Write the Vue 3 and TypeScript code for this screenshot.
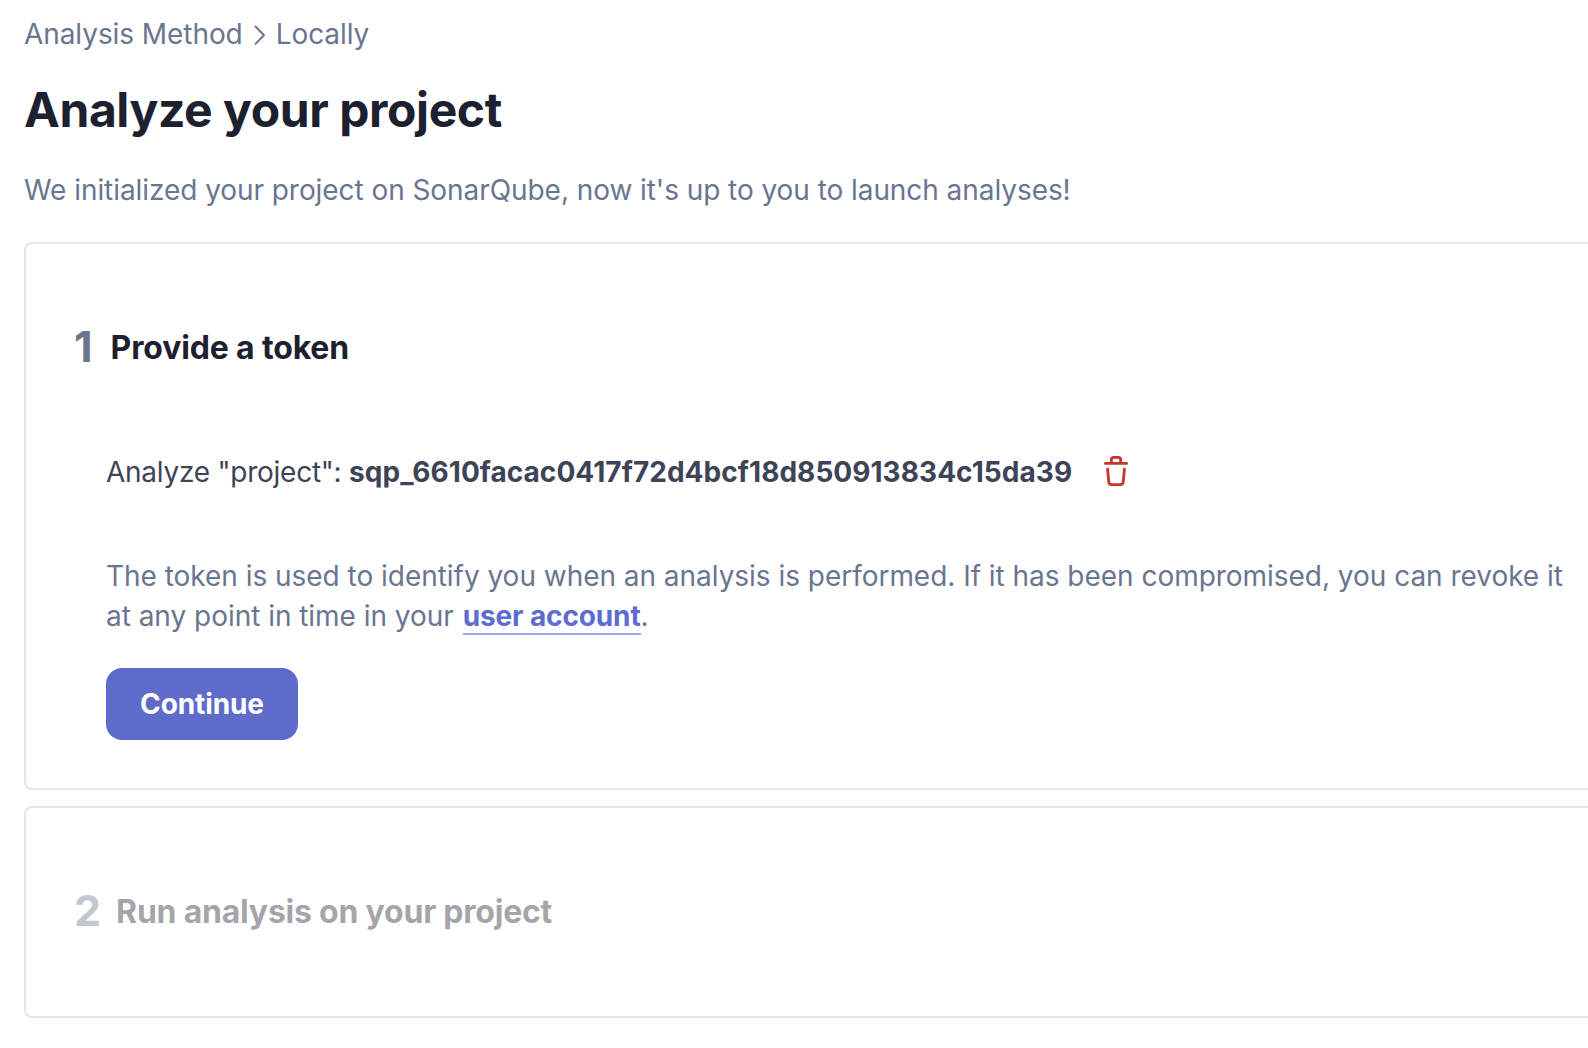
<script setup lang="ts">
const token: string = 'sqp_6610facac0417f72d4bcf18d850913834c15da39'
</script>

<template>
  <main class="page">
    <nav class="crumbs">
      <span>Analysis Method</span>
      <svg width="12" height="22" viewBox="0 0 12 22" fill="none"><path d="M1.5 3.5 L10 12.2 L1.5 20.9" stroke="#6a7590" stroke-width="2" stroke-linecap="round" stroke-linejoin="round" /></svg>
      <span>Locally</span>
    </nav>
    <h1>Analyze your project</h1>
    <p class="intro">We initialized your project on SonarQube, now it's up to you to launch analyses!</p>
    <section class="card first">
      <header><span class="num">1</span><h2>Provide a token</h2></header>
      <div class="body">
        <div class="token">
          <span><span class="label">Analyze "project": </span><strong>{{ token }}</strong></span>
          <svg class="trash" width="24" height="32" viewBox="0 0 24 32" fill="none" stroke="#cb3527" stroke-width="2.8" stroke-linecap="round" stroke-linejoin="round"><path d="M1.4 8.4H22.6M7.4 8V4.5Q7.4 2.4 9.5 2.4H14.5Q16.6 2.4 16.6 4.5V8M3.6 14.2L4.8 27.2Q5 29.6 7.4 29.6H16.6Q19 29.6 19.2 27.2L20.4 14.2" /></svg>
        </div>
        <p class="note">The token is used to identify you when an analysis is performed. If it has been compromised, you can revoke it<br />at any point in time in your <a>user account</a>.</p>
        <button>Continue</button>
      </div>
    </section>
    <section class="card second">
      <header><span class="num">2</span><h2>Run analysis on your project</h2></header>
    </section>
  </main>
</template>

<style>
body { background: #fff; overflow: hidden; }
</style>
<style scoped>
.page { box-sizing: border-box; width: 1640px; height: 1048px; padding: 14px 0 0 24px; font: 400 28px/40px Inter, sans-serif; color: #6a7590; }
.crumbs { display: flex; align-items: center; gap: 10px; height: 40px; letter-spacing: -.07px; }
.crumbs svg { margin-left: 1px; }
h1 { margin: 24px 0 0; font-size: 48px; line-height: 64px; font-weight: 650; letter-spacing: -.42px; color: #1d212f; }
.intro { margin: 28px 0 32px; letter-spacing: -.063px; }
.card { box-sizing: border-box; border: 2px solid #e1e4f3; border-radius: 8px; padding: 80px 48px 0; }
.first { height: 548px; margin-bottom: 16px; }
.second { height: 212px; }
header { display: flex; align-items: center; height: 48px; gap: 18px; }
.num { font-size: 43px; font-weight: 650; margin-top: -5px; }
h2 { margin: 0; font-size: 32px; font-weight: 650; letter-spacing: -.15px; color: #1d212f; }
.second header { opacity: .4; gap: 15px; }
.second h2 { letter-spacing: -.22px; }
.body { padding-left: 32px; }
.token { display: flex; align-items: center; gap: 32px; margin-top: 80px; height: 40px; color: #3e4357; }
.trash { margin-bottom: 2px; }
.label { letter-spacing: -.25px; }
strong { font-weight: 650; letter-spacing: .05px; }
.note { margin: 64px 0 32px; white-space: nowrap; letter-spacing: -.03px; }
.note a { margin-left: 1px; }
a { color: #5d6cd0; font-weight: 650; letter-spacing: -.12px; border-bottom: 2px solid #a0a9e8; }
button { display: block; width: 192px; height: 72px; border: 0; border-radius: 16px; background: #5f6bc9; color: #fff; font: 650 28px Inter, sans-serif; letter-spacing: -.1px; }
</style>
